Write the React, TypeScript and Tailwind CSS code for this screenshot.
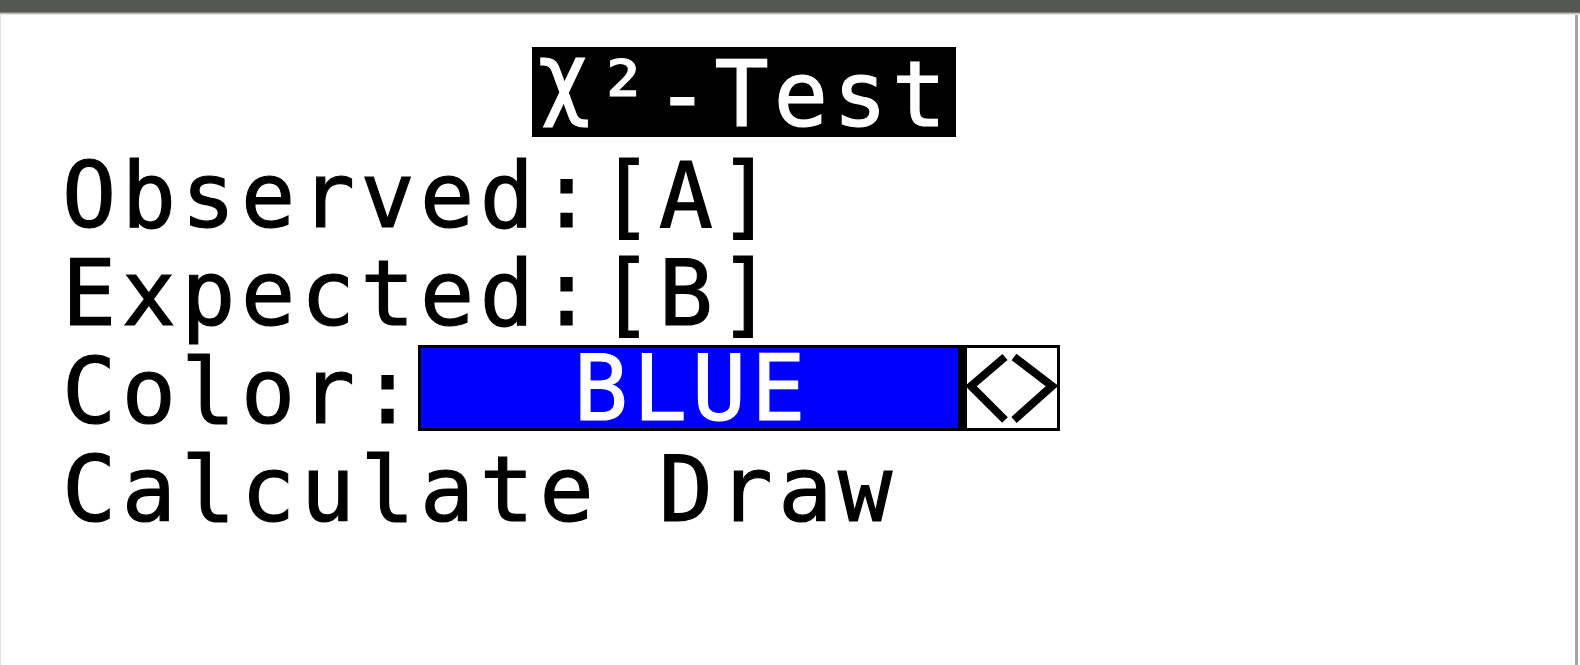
export default function App() {
  const heavy = "[-webkit-text-stroke:1.2px_currentcolor]";
  const line = `h-[98px] text-[90px] leading-[98px] tracking-[5.5px] whitespace-pre ${heavy}`;
  return (
    <div className="w-[1580px] h-[665px] bg-white overflow-hidden flex flex-col font-['DejaVu_Sans_Mono',monospace] text-black">
      {/* status bar strip */}
      <div className="h-[12px] bg-[#545753]" />
      <div className="h-[1px] bg-[#80827e]" />
      <div className="h-[1px] bg-[#b9bab8]" />
      <div className="h-[1px] bg-[#e6e6e6]" />

      <div className="flex-1 flex mr-[2px] border-l border-[#e2e2e2] border-r-[3px] border-r-[#a6a6a6]">
        <div className="flex-1 flex flex-col pt-[32px]">
          {/* menu title */}
          <div
            className={`ml-[531px] w-[424px] h-[90px] bg-black text-white text-[90px] leading-[80px] pt-[8px] pl-[5px] tracking-[5px] whitespace-pre ${heavy}`}
          >
            <span className="inline-block -translate-y-[18px]">χ</span>
            <span>²-Test</span>
          </div>

          <div className="mt-[10px] pl-[61px] flex flex-col">
            <div className={line}>Observed:[A]</div>
            <div className={line}>Expected:[B]</div>
            <div className="h-[98px] flex items-start">
              <div className={`text-[90px] leading-[98px] tracking-[5.5px] whitespace-pre ${heavy}`}>Color:</div>
              <div className="-ml-[2px] mt-[2px] h-[86px] w-[642px] border-[3px] border-black flex">
                <div
                  className={`flex-1 bg-[#0000ff] text-white text-[90px] leading-[82px] tracking-[5px] pl-[5px] flex justify-center ${heavy}`}
                >
                  BLUE
                </div>
                <div className="w-[9px] bg-black" />
                <div className="w-[90px] bg-white">
                  <svg width="90" height="80" viewBox="0 0 90 80">
                    <polyline points="38,9 4,38 38,72" fill="none" stroke="#000" strokeWidth="8" />
                    <polyline points="47,9 85,38 47,72" fill="none" stroke="#000" strokeWidth="8" />
                  </svg>
                </div>
              </div>
            </div>
            <div className={line}>Calculate Draw</div>
          </div>
        </div>
      </div>
    </div>
  );
}
